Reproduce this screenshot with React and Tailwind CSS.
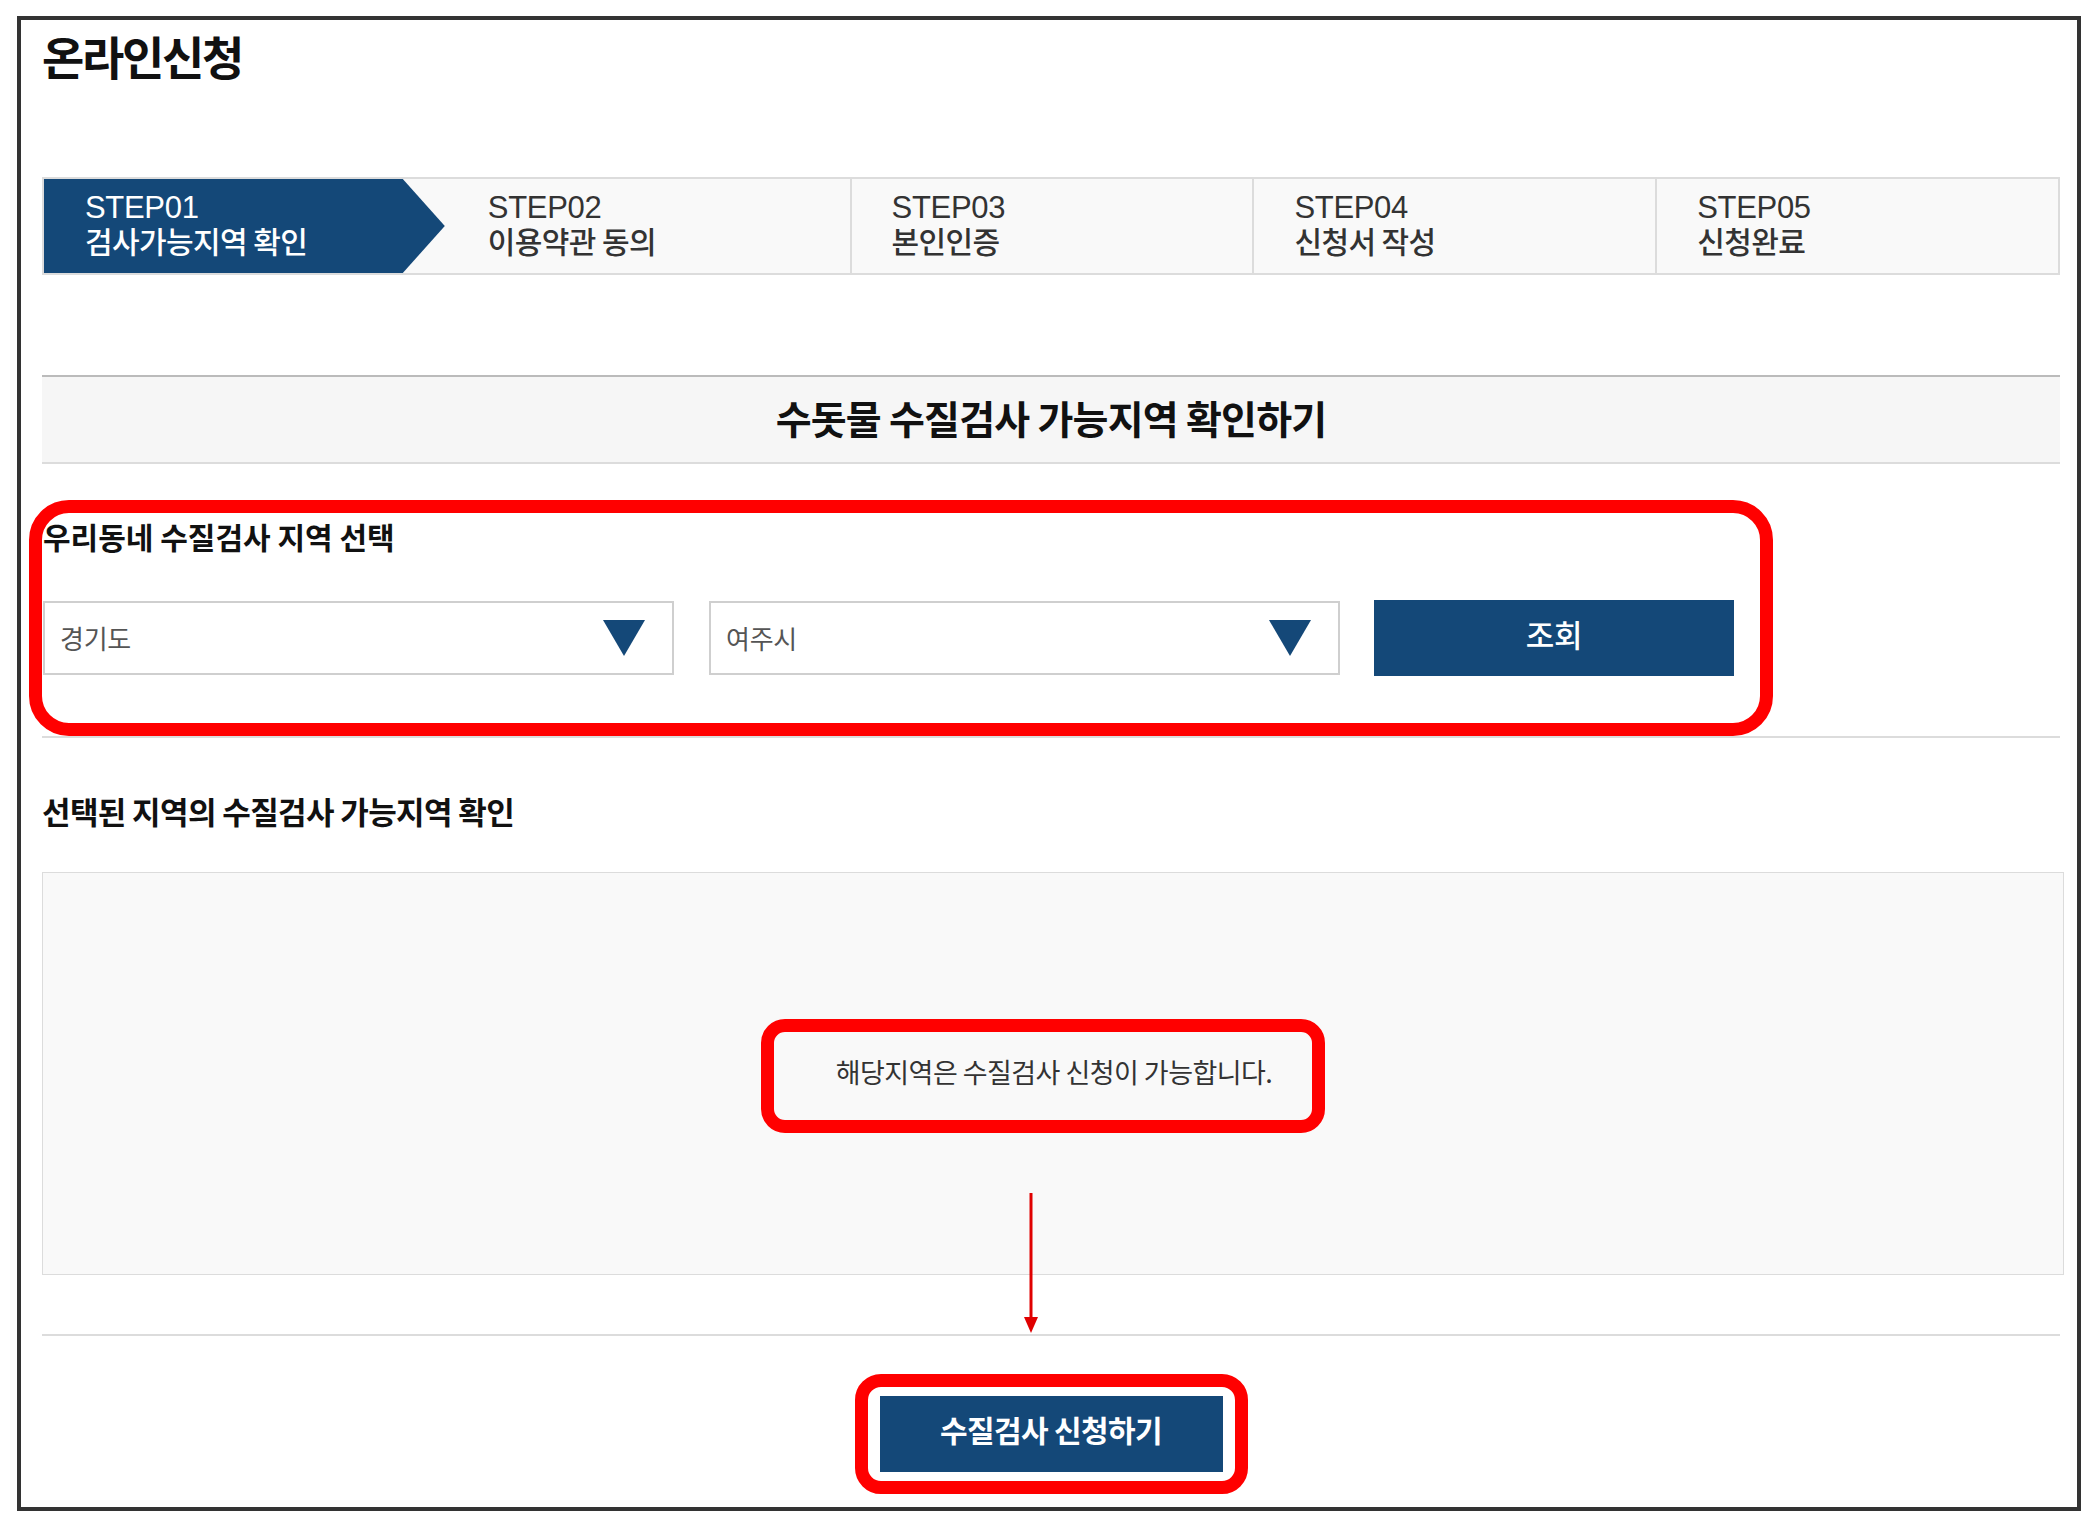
import React from "react";

const steps = [
  { no: "STEP01", label: "검사가능지역 확인" },
  { no: "STEP02", label: "이용약관 동의" },
  { no: "STEP03", label: "본인인증" },
  { no: "STEP04", label: "신청서 작성" },
  { no: "STEP05", label: "신청완료" },
];

const Select = ({ value }) => (
  <div className="flex h-[74px] w-[631px] items-center justify-between border-2 border-[#cfcfcf] bg-white pl-[15px] pr-[27px]">
    <span className="text-[26px] leading-none tracking-[-0.01em] text-[#555]">{value}</span>
    <svg width="42" height="36" viewBox="0 0 42 36">
      <polygon points="0,0 42,0 21,36" fill="#144878" />
    </svg>
  </div>
);

const App = () => {
  return (
    <div className="min-h-[1528px] bg-white pt-[16px] font-['Noto_Sans_CJK_KR',sans-serif]">
      <div className="ml-[17px] h-[1495px] w-[2064px] border-4 border-[#333] pl-[21px] pr-[17px]">
        <h1 className="mt-[12px] text-[46px] font-bold leading-none tracking-[-0.05em] text-[#111]">
          온라인신청
        </h1>

        {/* step bar */}
        <div className="mt-[99px] grid h-[98px] grid-cols-5 border-2 border-[#dcdcdc] bg-[#f9f9f9] font-['Liberation_Sans','Noto_Sans_CJK_KR',sans-serif]">
          {steps.map((s, i) => (
            <div
              key={s.no}
              className={
                i === 0
                  ? "flex flex-col justify-center bg-[#144878] pb-[4px] pl-[41px] text-white [clip-path:polygon(0_0,calc(100%_-_44px)_0,calc(100%_-_2px)_50%,calc(100%_-_44px)_100%,0_100%)]"
                  : i === 1
                  ? "flex flex-col justify-center pb-[4px] pl-[41px] text-[#333]"
                  : "flex flex-col justify-center border-l-2 border-[#dcdcdc] pb-[4px] pl-[40px] text-[#333]"
              }
            >
              <p className="text-[31px] leading-[34px] tracking-[-0.01em]">{s.no}</p>
              <p className="-mt-[2px] font-['Noto_Sans_CJK_KR',sans-serif] text-[30px] font-medium leading-[34px] tracking-[-0.02em]">
                {s.label}
              </p>
            </div>
          ))}
        </div>

        {/* heading */}
        <div className="mt-[100px] flex h-[89px] items-center justify-center border-t-2 border-b-2 border-t-[#bbb] border-b-[#dcdcdc] bg-[#f6f6f6] pb-[5px]">
          <h2 className="text-[39px] font-bold leading-none tracking-[-0.02em] text-[#111]">
            수돗물 수질검사 가능지역 확인하기
          </h2>
        </div>

        {/* region select */}
        <div className="-ml-[13px] mt-[36px] h-[236px] w-[1744px] rounded-[40px] border-[13px] border-[#ff0000] pl-[1px] pt-[8px]">
          <h3 className="text-[30px] font-bold leading-none text-[#111]">
            우리동네 수질검사 지역 선택
          </h3>
          <div className="mt-[49px] flex items-center gap-[35px]">
            <Select value="경기도" />
            <Select value="여주시" />
            <button
              type="button"
              className="-ml-px h-[76px] w-[360px] bg-[#144878] pb-[8px] text-[31px] font-medium tracking-[-0.01em] text-white"
            >
              조회
            </button>
          </div>
        </div>
        <div className="border-t-2 border-[#dcdcdc]" />

        {/* result */}
        <h3 className="mt-[57px] text-[31px] font-bold leading-none tracking-[-0.02em] text-[#111]">
          선택된 지역의 수질검사 가능지역 확인
        </h3>
        <div className="relative mt-[46px] flex h-[403px] w-[2022px] justify-center border border-[#dcdcdc] bg-[#f9f9f9] pt-[146px]">
          <div className="mr-[20px] flex h-[114px] w-[564px] items-center justify-center rounded-[24px] border-[13px] border-[#ff0000] pb-[10px] pl-[22px]">
            <p className="text-[27px] leading-none tracking-[-0.02em] text-[#333]">
              해당지역은 수질검사 신청이 가능합니다.
            </p>
          </div>
          <svg
            className="absolute left-[979px] top-[320px]"
            width="18"
            height="142"
            viewBox="0 0 18 142"
          >
            <line x1="9" y1="0" x2="9" y2="128" stroke="#e00000" strokeWidth="3" />
            <polygon points="2,124 16,124 9,140" fill="#e00000" />
          </svg>
        </div>
        <div className="mt-[59px] border-t-2 border-[#dcdcdc]" />

        {/* apply */}
        <div className="mt-[38px] flex justify-center">
          <div className="rounded-[26px] border-[13px] border-[#ff0000] px-[12px] py-[9px]">
            <button
              type="button"
              className="h-[76px] w-[343px] bg-[#144878] pb-[10px] text-[30px] font-bold tracking-[-0.02em] text-white"
            >
              수질검사 신청하기
            </button>
          </div>
        </div>
      </div>
    </div>
  );
};

export default App;
